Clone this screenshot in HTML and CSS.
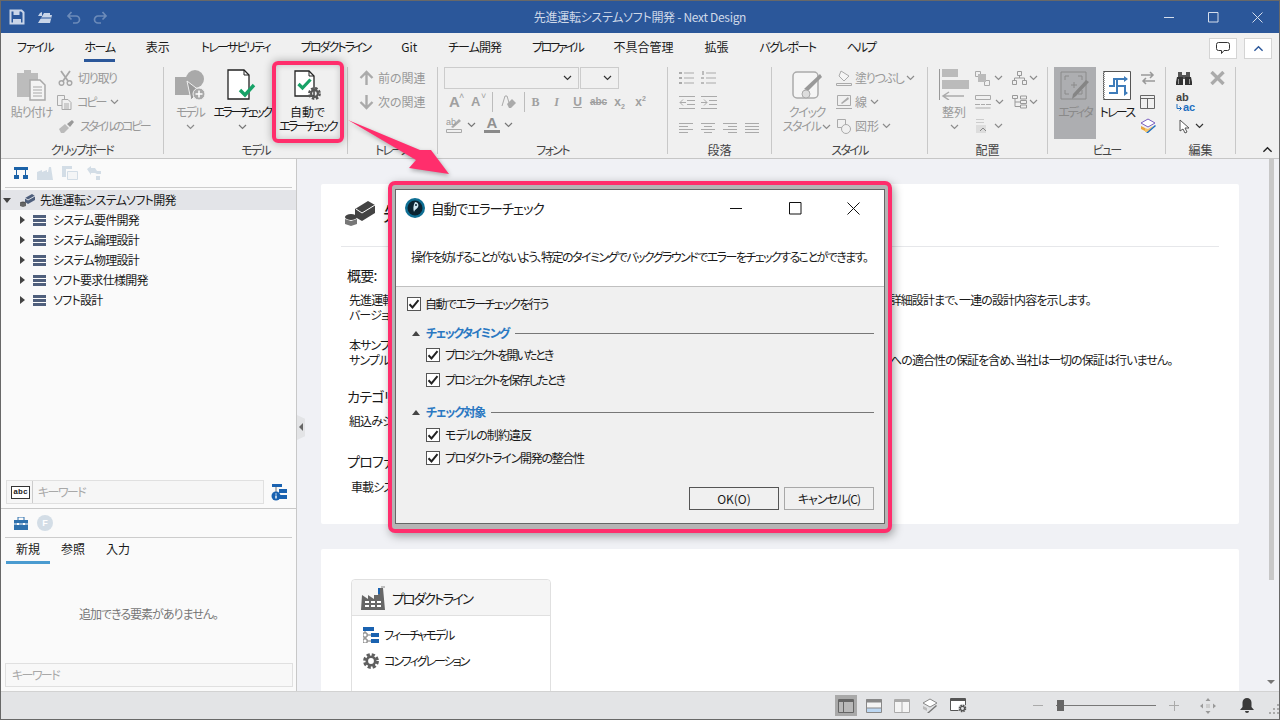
FILE: index.html
```html
<!DOCTYPE html>
<html lang="ja">
<head>
<meta charset="utf-8">
<title>先進運転システムソフト開発 - Next Design</title>
<link rel="stylesheet" href="styles.css">
</head>
<body>
<svg class="defs" width="0" height="0" aria-hidden="true">
  <defs>
    <symbol id="gear" viewBox="0 0 16 16"><circle cx="8" cy="8" r="4.2" fill="none" stroke="currentColor" stroke-width="2.6"/><circle cx="8" cy="8" r="6.4" fill="none" stroke="currentColor" stroke-width="3" stroke-dasharray="3.1 1.92"/></symbol>
    <symbol id="chev" viewBox="0 0 9 6"><path d="M1 1l3.5 3.5L8 1" fill="none" stroke="currentColor" stroke-width="1.2"/></symbol>
    <symbol id="tick" viewBox="0 0 14 14"><path d="M2.5 7.2l3 3.2 6-7.2" fill="none" stroke="currentColor" stroke-width="2"/></symbol>
    <symbol id="bars" viewBox="0 0 13 11"><path d="M0 0h13v3H0zM0 4h13v3H0zM0 8h13v3H0z" fill="#4f5f7c"/></symbol>
    <symbol id="feature" viewBox="0 0 16 16"><path d="M0 0h11v4H0zM8 6h8v4H8zM8 12h8v4H8z" fill="#1a62b0"/><path d="M2 4v10h6M2 8h6" fill="none" stroke="#777"/><path d="M0 6h4v4H0zM0 12h4v4H0z" fill="#fff" stroke="#777"/></symbol>
  </defs>
</svg>
<div class="window">
  <header class="titlebar">
    <div class="qat">
      <svg class="qi" width="16" height="16" viewBox="0 0 16 16"><path d="M1.500 1.500h11l2 2v11h-13z" fill="none" stroke="#c9d5e8" stroke-width="2"/><path d="M4.500 2h6v4h-6zM4 10h8v4.500H4z" fill="#c9d5e8"/></svg>
      <svg class="qi" width="16" height="16" viewBox="0 0 16 16"><path d="M1 7h4V3l-2 1M7 4h6v2h2l-2 8H1z" fill="#c9d5e8"/><path d="M3 9h11" stroke="#2b579a"/></svg>
      <svg class="qi" width="16" height="16" viewBox="0 0 16 16"><path d="M4 7h7a3.500 3.500 0 0 1 0 7H8M6.500 3L3 7l3.500 3.500" fill="none" stroke="#6c8bb9" stroke-width="1.700"/></svg>
      <svg class="qi" width="16" height="16" viewBox="0 0 16 16"><path d="M12 7H5a3.500 3.500 0 0 0 0 7h3M9.500 3L13 7l-3.500 3.500" fill="none" stroke="#6c8bb9" stroke-width="1.700"/></svg>
    </div>
    <div class="apptitle">先進運転システムソフト開発 - Next Design</div>
    <div class="winctl">
      <svg width="11" height="11" viewBox="0 0 11 11"><path d="M0 5.500h10" stroke="#d5deec"/></svg>
      <svg width="11" height="11" viewBox="0 0 11 11"><path d="M.5.500h9.500v9.500H.5z" fill="none" stroke="#d5deec"/></svg>
      <svg width="11" height="11" viewBox="0 0 11 11"><path d="M.5.500l10 10M10.500.500l-10 10" stroke="#d5deec"/></svg>
    </div>
  </header>

  <nav class="tabs">
    <span class="tab ls13">ファイル</span><span class="tab on ls13">ホーム</span><span class="tab">表示</span><span class="tab ls17">トレーサビリティ</span><span class="tab ls20">プロダクトライン</span><span class="tab">Git</span><span class="tab ls10">チーム開発</span><span class="tab ls23">プロファイル</span><span class="tab">不具合管理</span><span class="tab">拡張</span><span class="tab ls15">バグレポート</span><span class="tab ls20">ヘルプ</span>
    <div class="tabtools">
      <span class="tbtn"><svg width="14" height="13" viewBox="0 0 14 13"><path d="M2.500.500h9a2 2 0 0 1 2 2v4a2 2 0 0 1-2 2H8l-2.500 3v-3h-3a2 2 0 0 1-2-2v-4a2 2 0 0 1 2-2z" fill="none" stroke="#333"/></svg></span>
      <span class="tbtn"><svg class="blue" width="11" height="7" viewBox="0 0 9 6"><path d="M1 5l3.500-3.500L8 5" fill="none" stroke="currentColor" stroke-width="1.200"/></svg></span>
    </div>
  </nav>

  <section class="ribbon">
    <div class="grp g-clip">
      <div class="body">
        <div class="big dis b-paste">
          <div class="ico"><svg width="30" height="32" viewBox="0 0 30 32"><path d="M0 4h7V1h7v3h7v24H0z" fill="#bcbcbc"/><path d="M13 11h10l5 5v15H13z" fill="#f4f4f4" stroke="#a8a8a8" stroke-width="1.500"/><path d="M16 18h9M16 21h9M16 24h9M16 27h9" stroke="#a8a8a8"/></svg></div>
          <span class="ls10">貼り付け</span>
        </div>
        <div class="smalls s-clip">
          <div class="srow dis"><svg width="15" height="16" viewBox="0 0 15 16"><circle cx="3.500" cy="13" r="2.300" fill="none" stroke="#a8a8a8" stroke-width="1.500"/><circle cx="11.500" cy="13" r="2.300" fill="none" stroke="#a8a8a8" stroke-width="1.500"/><path d="M3 1l7 10M12 1L5 11" stroke="#a8a8a8" stroke-width="1.800"/></svg><span class="ls13">切り取り</span></div>
          <div class="srow dis r-copy"><svg width="15" height="15" viewBox="0 0 15 15"><path d="M.5.500h7v10h-7z" fill="#f0f0f0" stroke="#aaa"/><path d="M5 4.500h6l3 3v7H5z" fill="#f0f0f0" stroke="#aaa"/><path d="M7 9h5M7 11h5M7 13h5" stroke="#aaa"/></svg><span class="ls20">コピー</span><svg class="chev" width="9" height="6"><use href="#chev"/></svg></div>
          <div class="srow dis"><svg width="17" height="14" viewBox="0 0 17 14"><path d="M1 10l6-5 4 4-5 5H3z" fill="#bbb"/><path d="M9 5l5-4 2 2-4 5z" fill="#999"/></svg><span class="ls25">スタイルのコピー</span></div>
        </div>
      </div>
      <div class="glabel">クリップボード</div>
    </div>

    <div class="grp g-model">
      <div class="body">
        <div class="big dis b-model">
          <div class="ico"><svg width="32" height="32" viewBox="0 0 32 32"><path d="M1 8h18v18H1z" fill="#a9a9a9"/><circle cx="21" cy="10" r="9" fill="#a9a9a9"/><path d="M13 12l13 10-9 9z" fill="#999" stroke="#f0f0f0"/><circle cx="25" cy="25" r="6" fill="#a9a9a9" stroke="#f0f0f0"/><path d="M25 21.500v7M21.500 25h7" stroke="#fff" stroke-width="1.500"/></svg></div>
          <span class="ls20">モデル</span>
          <svg class="chev" width="9" height="6"><use href="#chev"/></svg>
        </div>
        <div class="big b-err">
          <div class="ico"><svg width="30" height="32" viewBox="0 0 30 32"><path d="M1 1h16l5 5v24H1z" fill="#fff" stroke="#222" stroke-width="1.300"/><path d="M17 1v5h5" fill="none" stroke="#222"/><path d="M13 21l5 5 9-10" fill="none" stroke="#17a267" stroke-width="3.400"/></svg></div>
          <span class="ls25">エラーチェック</span>
          <svg class="chev" width="9" height="6"><use href="#chev"/></svg>
        </div>
        <div class="big b-auto">
          <div class="ico"><svg width="27" height="30" viewBox="0 0 27 30"><path d="M1 1h14l5 5v20H1z" fill="#fff" stroke="#222" stroke-width="1.300"/><path d="M15 1v5h5" fill="none" stroke="#222"/><path d="M4.500 14l4 4 8-8.500" fill="none" stroke="#17a267" stroke-width="3.200"/><use href="#gear" x="14" y="17" width="13" height="13" class="gearc"/></svg></div>
          <span>自動で<br><span class="ls25">エラーチェック</span></span>
        </div>
      </div>
      <div class="glabel">モデル</div>
    </div>

    <div class="grp g-rel">
      <div class="body">
        <div class="smalls s-rel">
          <div class="srow dis"><svg width="15" height="16" viewBox="0 0 15 16"><path d="M7.500 15V2M1.500 8l6-6 6 6" fill="none" stroke="#aaa" stroke-width="2.400"/></svg><span>前の関連</span></div>
          <div class="srow dis"><svg width="15" height="16" viewBox="0 0 15 16"><path d="M7.500 1v13M1.500 8l6 6 6-6" fill="none" stroke="#aaa" stroke-width="2.400"/></svg><span>次の関連</span></div>
        </div>
      </div>
      <div class="glabel">トレース</div>
    </div>

    <div class="grp g-font">
      <div class="body col">
        <div class="combos">
          <span class="combo c-name"><svg class="chev dark" width="9" height="6"><use href="#chev"/></svg></span>
          <span class="combo c-size"><svg class="chev dark" width="9" height="6"><use href="#chev"/></svg></span>
        </div>
        <div class="frow f2">
          <b class="fa big1">A<i>˄</i></b><b class="fa big2">A<i>˅</i></b><span class="vsep"></span>
          <svg class="eraser" width="16" height="15" viewBox="0 0 16 15"><path d="M1 11L4 1h2l3 10" fill="none" stroke="#aaa"/><path d="M6 9l5-5 4 4-5 5H8z" fill="#aaa"/></svg><span class="vsep"></span>
          <b class="fb">B</b><i class="fb fi">I</i><u class="fb fu">U</u><s class="fb fs">abc</s><b class="fb fx">x<sub>2</sub></b><b class="fb fx">x<sup>2</sup></b>
        </div>
        <div class="frow f3">
          <svg width="17" height="16" viewBox="0 0 17 16"><path d="M5 10l8-8 2 2-8 7z" fill="#aaa"/><path d="M.5 12.500h15v3H.5z" fill="#f0f0f0" stroke="#aaa"/><text x="0" y="8" class="abt">ab</text></svg>
          <svg class="chev" width="9" height="6"><use href="#chev"/></svg>
          <span class="afont">A</span>
          <svg class="chev" width="9" height="6"><use href="#chev"/></svg>
        </div>
      </div>
      <div class="glabel">フォント</div>
    </div>

    <div class="grp g-para">
      <div class="body col pcol">
        <div class="prow">
          <svg width="15" height="14" viewBox="0 0 15 14"><path d="M5 2h10M5 7h10M5 12h10" stroke="#aaa"/><path d="M0 1h3v2H0zM0 6h3v2H0zM0 11h3v2H0z" fill="#aaa"/></svg>
          <svg width="15" height="14" viewBox="0 0 15 14"><path d="M5 2h10M5 7h10M5 12h10" stroke="#aaa"/><path d="M1 0h2v4H1zM0 6h3v2H0zM0 11h3v2H0z" fill="#bbb"/></svg>
        </div>
        <div class="prow p2">
          <svg width="16" height="13" viewBox="0 0 16 13"><path d="M0 .500h16M8 4.500h8M8 8.500h8M0 12.500h16M7 6.500H1M4 3.500l-3 3 3 3" fill="none" stroke="#aaa"/></svg>
          <svg width="16" height="13" viewBox="0 0 16 13"><path d="M0 .500h16M8 4.500h8M8 8.500h8M0 12.500h16M0 6.500h6M3 3.500l3 3-3 3" fill="none" stroke="#aaa"/></svg>
        </div>
        <div class="prow p3">
          <svg width="14" height="10" viewBox="0 0 14 10"><path d="M0 .500h14M0 3.500h9M0 6.500h14M0 9.500h9" stroke="#aaa"/></svg>
          <svg width="14" height="10" viewBox="0 0 14 10"><path d="M0 .500h14M3 3.500h8M0 6.500h14M3 9.500h8" stroke="#aaa"/></svg>
          <svg width="14" height="10" viewBox="0 0 14 10"><path d="M0 .500h14M5 3.500h9M0 6.500h14M5 9.500h9" stroke="#aaa"/></svg>
          <svg width="14" height="10" viewBox="0 0 14 10"><path d="M0 .500h14M0 3.500h14M0 6.500h14M0 9.500h14" stroke="#aaa"/></svg>
        </div>
      </div>
      <div class="glabel kj">段落</div>
    </div>

    <div class="grp g-style">
      <div class="body">
        <div class="big dis b-quick">
          <div class="ico"><svg width="31" height="29" viewBox="0 0 31 29"><rect x="1" y="1" width="25" height="26" rx="4" fill="#f5f5f5" stroke="#aaa" stroke-width="1.500"/><path d="M30 6L16 20l-4-2L28 3z" fill="#999"/><circle cx="14" cy="23" r="4" fill="#ddd" stroke="#aaa"/></svg></div>
          <span class="ls13">クイック<br>スタイル<svg class="chev" width="9" height="6"><use href="#chev"/></svg></span>
        </div>
        <div class="smalls s-style">
          <div class="srow dis"><svg width="16" height="16" viewBox="0 0 16 16"><path d="M5 1l8 5-5 5-5-5z" fill="#f5f5f5" stroke="#aaa"/><path d="M.5 13.500h15v2H.5z" fill="none" stroke="#aaa"/></svg><span class="ls13">塗りつぶし</span><svg class="chev" width="9" height="6"><use href="#chev"/></svg></div>
          <div class="srow dis"><svg width="16" height="16" viewBox="0 0 16 16"><path d="M1.500 1.500h13v10h-13zM0 14.500h16" fill="none" stroke="#aaa"/><path d="M5 9l7-6 1 2-7 5z" fill="#aaa"/></svg><span>線</span><svg class="chev" width="9" height="6"><use href="#chev"/></svg></div>
          <div class="srow dis"><svg width="16" height="16" viewBox="0 0 16 16"><path d="M1.500 1.500h8v8h-8z" fill="none" stroke="#aaa"/><circle cx="10" cy="11" r="4.500" fill="#f0f0f0" stroke="#aaa"/></svg><span>図形</span><svg class="chev" width="9" height="6"><use href="#chev"/></svg></div>
        </div>
      </div>
      <div class="glabel">スタイル</div>
    </div>

    <div class="grp g-arr">
      <div class="body">
        <div class="big dis b-arr">
          <div class="ico"><svg width="30" height="31" viewBox="0 0 30 31"><path d="M.5 0v31" stroke="#999"/><path d="M3 0h16v8H3zM3 11h27v9H3z" fill="#bbb"/><path d="M25 27H4M10 23l-6 4 6 4" fill="none" stroke="#aaa" stroke-width="1.500"/></svg></div>
          <span>整列</span>
          <svg class="chev" width="9" height="6"><use href="#chev"/></svg>
        </div>
        <div class="smalls s-arr">
          <div class="srow dis"><svg width="15" height="15" viewBox="0 0 15 15"><path d="M.5.500h5v5h-5zM9.500 9.500h5v5h-5z" fill="#f0f0f0" stroke="#aaa"/><path d="M3 3h8v8H3z" fill="#bbb"/></svg><svg class="chev" width="9" height="6"><use href="#chev"/></svg></div>
          <div class="srow dis"><svg width="16" height="14" viewBox="0 0 16 14"><path d="M.5.500h15v4H.5z" fill="none" stroke="#aaa"/><path d="M0 9.500h5M11 9.500h5M6 9.500h4M.5 13h15" stroke="#aaa"/></svg><svg class="chev" width="9" height="6"><use href="#chev"/></svg></div>
          <div class="srow dis"><svg width="15" height="15" viewBox="0 0 15 15"><path d="M1 .500h8M1 3.500h8" stroke="#ccc"/><path d="M1 6h10v8H1z" fill="#ddd"/><path d="M5 12l3-3 3 3" fill="none" stroke="#888"/></svg><svg class="chev" width="9" height="6"><use href="#chev"/></svg></div>
        </div>
        <div class="smalls s-arr2">
          <div class="srow dis"><svg width="15" height="14" viewBox="0 0 15 14"><path d="M5.500.500h4v4h-4zM.5 9.500h4v4h-4zM10.500 9.500h4v4h-4zM7.500 4.500v2.500M2.500 9.500V7h10v2.500" fill="none" stroke="#999"/></svg><svg class="chev" width="9" height="6"><use href="#chev"/></svg></div>
          <div class="srow dis"><svg width="15" height="14" viewBox="0 0 15 14"><path d="M.5.500h5v3h-5zM8.500 1h6v3h-6zM8.500 5.500h6v3h-6zM8.500 10h6v3h-6zM3 3.500V11.500h5.500M3 7h5.500" fill="none" stroke="#999"/></svg><svg class="chev" width="9" height="6"><use href="#chev"/></svg></div>
        </div>
      </div>
      <div class="glabel kj">配置</div>
    </div>

    <div class="grp g-view">
      <div class="body">
        <div class="big active b-ed">
          <div class="ico"><svg width="30" height="29" viewBox="0 0 30 29"><path d="M1 1h25v27H1z" fill="none" stroke="#8a8a8a"/><path d="M5 9V5h4M18 5h4v4M5 19v4h4M22 19v4h-4M11 14h6M14 11v6" fill="none" stroke="#8a8a8a"/><path d="M29 11L16 25l-4 3 1-5L26 9z" fill="#858585"/></svg></div>
          <span class="ls20">エディタ</span>
        </div>
        <div class="big b-tr">
          <div class="ico"><svg width="28" height="29" viewBox="0 0 28 29"><path d="M.5.500h27v28H.500z" fill="#fff" stroke="#555"/><path d="M1 1v27" stroke="#999" stroke-dasharray="1 1" stroke-width="2"/><path d="M6 15h5V8h8M6 22h8V8M14 15h8v7h2M19 8h5" fill="none" stroke="#3e7cba" stroke-width="2"/><path d="M21 5l4 3-4 3zM21 19l4 3-4 3z" fill="#3e7cba"/></svg></div>
          <span class="ls17">トレース</span>
        </div>
        <div class="smalls s-view">
          <div class="srow"><svg width="16" height="14" viewBox="0 0 16 14"><path d="M1 4h12M10 1l3 3-3 3M15 10H3M6 7l-3 3 3 3" fill="none" stroke="#999" stroke-width="1.500"/></svg></div>
          <div class="srow"><svg width="15" height="14" viewBox="0 0 15 14"><path d="M.5.500h14v13H.5zM.5 3.500h14M7.500 3.500v10" fill="none" stroke="#666"/></svg></div>
          <div class="srow"><svg width="16" height="16" viewBox="0 0 16 16"><path d="M1 5l7-4 7 4-7 4z" fill="#fff" stroke="#7a5fc0"/><path d="M1 8l4 2v3l-4-2z" fill="#e9a53a"/><path d="M5 10l3 1 5-3-4 6H5z" fill="#f4c36a"/><path d="M6 15l9-8 1 1-8 7z" fill="#1e6fc0"/></svg></div>
        </div>
      </div>
      <div class="glabel">ビュー</div>
    </div>

    <div class="grp g-edit">
      <div class="body">
        <div class="smalls s-edit">
          <div class="srow"><svg width="16" height="13" viewBox="0 0 16 13"><path d="M2 0h4v5H2zM10 0h4v5h-4zM6 3h4v4H6z" fill="#555"/><path d="M1 5h6v8H0v-3zM9 5h6l1 5v3H9z" fill="#333"/><path d="M2.500 7v5M13.500 7v5" stroke="#999"/></svg><svg class="xmark" width="15" height="14" viewBox="0 0 15 14"><path d="M1.500 1l12 12M13.500 1l-12 12" stroke="#aaa" stroke-width="3.400"/></svg></div>
          <div class="srow abac"><b>ab</b><b class="ac"><svg class="rep" width="6" height="7" viewBox="0 0 6 7"><path d="M1 0v4.500h4M3.500 2.500l2 2-2 2" fill="none" stroke="#1e6fc0"/></svg>ac</b></div>
          <div class="srow"><svg class="cur" width="12" height="15" viewBox="0 0 12 15"><path d="M1 1v11l3-2 2 4 2-1-2-4h4z" fill="#fff" stroke="#555"/></svg><svg class="chev dark" width="9" height="6"><use href="#chev"/></svg></div>
        </div>
      </div>
      <div class="glabel kj">編集</div>
    </div>
    <div class="ribbon-end"><svg width="11" height="7" viewBox="0 0 9 6"><path d="M1 5l3.500-3.500L8 5" fill="none" stroke="#222" stroke-width="1.200"/></svg></div>
  </section>

  <main class="main">
    <aside class="left">
      <div class="ltool">
        <svg width="14" height="12" viewBox="0 0 14 12"><path d="M0 0h14v3H0zM0 8h5v4H0zM9 8h5v4H9z" fill="#1b62a8"/><path d="M2.500 3v5M11.500 3v5" stroke="#1b62a8"/></svg>
        <svg width="16" height="14" viewBox="0 0 16 14"><path d="M0 6l5-2v2l5-2v2h1l1-5h2l2 13H0z" fill="#d3dde6"/></svg>
        <svg width="16" height="14" viewBox="0 0 16 14"><path d="M0 0h10v3H0z" fill="#d3dde6"/><path d="M0 3h4v8H0z" fill="#d3dde6"/><path d="M5.500 5.500h10v8h-10z" fill="#f4f5f6" stroke="#d3dde6"/></svg>
        <svg width="14" height="14" viewBox="0 0 14 14"><path d="M0 3l4-3v2h4l2 3h4v3l-4 0-2-1H4v2z" fill="#d3dde6"/><path d="M9 10h4v4H9z" fill="#d3dde6"/></svg>
      </div>
      <div class="tree">
        <div class="node root"><span class="tri down"></span><svg width="15" height="13" viewBox="0 0 15 13"><path d="M5 4l7-4 3 2v4L8 10 5 8z" fill="#4f5f7c"/><path d="M5 4l3 2 7-4" fill="none" stroke="#fff" stroke-width=".8"/><ellipse cx="3" cy="9" rx="3" ry="1.500" fill="#555"/><path d="M0 9v3l3 1 3-1V9z" fill="#666"/></svg><span>先進運転システムソフト開発</span></div>
        <div class="node"><span class="tri"></span><svg width="13" height="11"><use href="#bars"/></svg><span>システム要件開発</span></div>
        <div class="node"><span class="tri"></span><svg width="13" height="11"><use href="#bars"/></svg><span>システム論理設計</span></div>
        <div class="node"><span class="tri"></span><svg width="13" height="11"><use href="#bars"/></svg><span>システム物理設計</span></div>
        <div class="node"><span class="tri"></span><svg width="13" height="11"><use href="#bars"/></svg><span>ソフト要求仕様開発</span></div>
        <div class="node"><span class="tri"></span><svg width="13" height="11"><use href="#bars"/></svg><span>ソフト設計</span></div>
      </div>
      <div class="searchrow">
        <div class="search">
          <span class="abc">abc</span>
          <span class="ph">キーワード</span>
        </div>
        <svg class="infoi" width="16" height="17" viewBox="0 0 16 17"><path d="M1 0h10v3H1zM8 5h8v4H8zM8 11h8v4H8z" fill="#1a62b0"/><path d="M5 3v5" stroke="#777"/><circle cx="5" cy="12" r="4.500" fill="#1a62b0"/><path d="M5 9.500v1M5 11.500v3" stroke="#fff" stroke-width="1.400"/></svg>
      </div>
      <div class="lower">
        <div class="ltool low">
          <svg width="14" height="13" viewBox="0 0 14 13"><path d="M0 3h14v10H0z" fill="#2f71ad"/><path d="M4 3V0h6v3" fill="none" stroke="#2f71ad"/><path d="M0 7h14" stroke="#fff"/><path d="M3 6h2v2H3zM9 6h2v2H9z" fill="#fff"/></svg>
          <span class="fcircle">F</span>
        </div>
        <div class="ptabs"><span class="ptab on">新規</span><span class="ptab">参照</span><span class="ptab">入力</span></div>
        <div class="pane">追加できる要素がありません。</div>
        <div class="kw">キーワード</div>
      </div>
    </aside>

    <div class="content">
      <div class="cards">
        <article class="card c1">
          <div class="chead">
            <svg width="30" height="25" viewBox="0 0 30 25"><path d="M10 8L23 0l7 4v8l-13 8-7-4z" fill="#444"/><path d="M11 8l6 4 13-8" fill="none" stroke="#fff" stroke-width="1"/><ellipse cx="6" cy="16" rx="6" ry="3" fill="#444"/><path d="M0 18v5l6 2 6-2v-5l-6 2z" fill="#777"/></svg>
            <h1>先進運転システムソフト開発</h1>
          </div>
          <h3 class="h-first">概要:</h3>
          <p class="p-first">先進運転システムソフト開発のサンプルプロジェクトです。システム要件開発からソフト要求仕様開発を経て基本設計詳細設計まで、一連の設計内容を示します。<br>バージョン 1.0</p>
          <p class="p-next">本サンプルはNext Designの利用例を紹介するものです。<br>サンプルおよびその内容について、明示または黙示を問わず、商品性、安全性等、正確性、完全性、有用性、特定の目的への適合性の保証を含め、当社は一切の保証は行いません。</p>
          <h3 class="h-cat">カテゴリ</h3>
          <p class="p-val">組込みシステム</p>
          <h3 class="h-prof">プロファイル</h3>
          <p class="p-val2">車載システム</p>
        </article>
        <article class="card c2">
          <div class="sub">
            <div class="subhead">
              <svg width="25" height="24" viewBox="0 0 25 24"><path d="M0 24l1-15 6 4V9l6 4V9h4l1-7h4l2 22z" fill="#666"/><path d="M17 8V2h2v6z" fill="#1a62b0"/><path d="M20 1h4" stroke="#888"/><path d="M4 15h4v2H4zM10 15h4v2h-4zM16 15h4v2h-4zM4 19h4v2H4zM10 19h4v2h-4zM16 19h4v2h-4z" fill="#fff"/></svg>
              <span class="ls20">プロダクトライン</span>
            </div>
            <div class="subrow"><svg width="16" height="16"><use href="#feature"/></svg><span class="ls20">フィーチャモデル</span></div>
            <div class="subrow"><svg class="gearg" width="16" height="16"><use href="#gear"/></svg><span class="ls20">コンフィグレーション</span></div>
          </div>
        </article>
      </div>
      <div class="vscroll"><span class="thumb"></span><span class="down"></span></div>
      <span class="grip"></span>
    </div>
  </main>

  <footer class="status">
    <span class="st on"><svg width="16" height="14" viewBox="0 0 16 14"><path d="M.5.500h15v13H.5z" fill="#b9b9b9" stroke="#666"/><path d="M0 1h16v2H0z" fill="#666"/><path d="M5.500 3v10" stroke="#666"/></svg></span>
    <span class="st"><svg width="16" height="14" viewBox="0 0 16 14"><path d="M.5.500h15v13H.5z" fill="#f4f4f4" stroke="#888"/><path d="M1 9h14v4H1z" fill="#bcd7f2"/><path d="M0 1h16v2H0zM0 9h16" fill="#888" stroke="#888"/></svg></span>
    <span class="st"><svg width="16" height="14" viewBox="0 0 16 14"><path d="M.5.500h15v13H.5z" fill="#f4f4f4" stroke="#aaa"/><path d="M0 1h16v2H0z" fill="#aaa"/><path d="M8 3v10" stroke="#aaa"/></svg></span>
    <span class="st"><svg width="16" height="16" viewBox="0 0 16 16"><path d="M1 5l7-4 7 4-7 4z" fill="#fff" stroke="#888"/><path d="M1 8l4 2v3l-4-2z" fill="#bbb"/><path d="M5 15l9-8 1 1-8 7z" fill="#777"/></svg></span>
    <span class="st"><svg width="17" height="15" viewBox="0 0 17 15"><path d="M.5.500h15v12H.5z" fill="#fff" stroke="#555"/><path d="M0 1h16v2H0z" fill="#555"/><circle cx="12.500" cy="10.500" r="4.500" fill="#e3e4e6"/><use href="#gear" x="8.500" y="6.500" width="8" height="8" class="gearc"/></svg></span>
    <span class="zoomminus"></span>
    <span class="slider"><i></i></span>
    <span class="zoomplus"></span>
    <svg class="fit" width="16" height="16" viewBox="0 0 16 16"><path d="M8 0l2.500 3h-5zM8 16l-2.500-3h5zM0 8l3-2.500v5zM16 8l-3 2.500v-5z" fill="#999"/><path d="M6 6h4v4H6z" fill="#ccc"/></svg>
    <svg class="bell" width="14" height="15" viewBox="0 0 14 15"><path d="M7 0a4.500 4.500 0 0 1 4.500 4.500V9L14 12H0l2.500-3V4.500A4.500 4.500 0 0 1 7 0zM5 13h4a2 2 0 0 1-4 0z" fill="#3a3a3a"/></svg>
    <svg class="sgrip" width="11" height="11" viewBox="0 0 11 11"><path d="M9 0h2v2H9zM5 4h2v2H5zM9 4h2v2H9zM1 8h2v2H1zM5 8h2v2H5zM9 8h2v2H9z" fill="#aaa"/></svg>
  </footer>

  <div class="mark"></div>
  <svg class="arrow" width="120" height="70" viewBox="0 0 120 70"><path d="M1 1L73 31 84 31 102 55 62 49 69 41z" fill="#ff2e6c"/></svg>

  <div class="dialog">
    <div class="dlg">
      <div class="dhead">
        <div class="dtitle">
          <svg width="20" height="20" viewBox="0 0 20 20"><circle cx="10" cy="10" r="10" fill="#0f6f94"/><circle cx="10" cy="10" r="7.500" fill="#0b2432"/><path d="M10 4c3 0 4 3 3 5s-3 2-4 5c-1-3-1-6 1-10z" fill="#cfe6f2"/><circle cx="11" cy="7" r="1" fill="#0b2432"/></svg>
          <span class="ls11">自動でエラーチェック</span>
          <div class="dctl">
            <span><svg width="13" height="13" viewBox="0 0 13 13"><path d="M0 6.500h12" stroke="#111"/></svg></span>
            <span><svg width="13" height="13" viewBox="0 0 13 13"><path d="M.5.500h11.500v11.500H.5z" fill="none" stroke="#111"/></svg></span>
            <span><svg width="13" height="13" viewBox="0 0 13 13"><path d="M.5.500l12 12M12.500.500l-12 12" stroke="#111"/></svg></span>
          </div>
        </div>
        <p class="ddesc ls15">操作を妨げることがないよう、特定のタイミングでバックグラウンドでエラーをチェックすることができます。</p>
      </div>
      <div class="dbody">
        <label class="chk top"><span class="box"><svg width="14" height="14"><use href="#tick"/></svg></span><span class="ls15">自動でエラーチェックを行う</span></label>
        <div class="sect s1"><span class="tri up"></span><b class="ls15">チェックタイミング</b><i></i></div>
        <label class="chk sub1"><span class="box"><svg width="14" height="14"><use href="#tick"/></svg></span><span class="ls20">プロジェクトを開いたとき</span></label>
        <label class="chk sub2"><span class="box"><svg width="14" height="14"><use href="#tick"/></svg></span><span class="ls17">プロジェクトを保存したとき</span></label>
        <div class="sect s2"><span class="tri up"></span><b class="ls13">チェック対象</b><i></i></div>
        <label class="chk sub3"><span class="box"><svg width="14" height="14"><use href="#tick"/></svg></span><span class="ls09">モデルの制約違反</span></label>
        <label class="chk sub3"><span class="box"><svg width="14" height="14"><use href="#tick"/></svg></span><span class="ls13">プロダクトライン開発の整合性</span></label>
        <div class="dbtns"><button class="btn def">OK(O)</button><button class="btn ls10">キャンセル(C)</button></div>
      </div>
    </div>
  </div>
</div>
</body>
</html>
```
FILE: styles.css
```css
*{box-sizing:border-box}
html,body{margin:0;padding:0;height:720px;overflow:hidden}
body{font:12px/16px "Noto Sans CJK JP","Noto Sans",sans-serif;font-feature-settings:"palt";color:#1a1a1a;background:#f0f0f0}
.defs{position:absolute}
svg{display:block;flex:none}
.ls09{letter-spacing:-.9px}
.ls10{letter-spacing:-1px}
.ls11{letter-spacing:-1.100px}
.ls13{letter-spacing:-1.300px}
.ls15{letter-spacing:-1.550px}
.ls17{letter-spacing:-1.750px}
.ls20{letter-spacing:-2px}
.ls23{letter-spacing:-2.300px}
.ls25{letter-spacing:-2.500px}
.window{position:relative;width:1280px;height:720px;border:1px solid #686868;display:flex;flex-direction:column;overflow:hidden}

.titlebar{height:32px;background:#2b579a;display:flex;align-items:center;position:relative;flex:none}
.qat{display:flex;gap:12px;padding-left:8px}
.apptitle{position:absolute;left:0;right:0;text-align:center;color:#cfd9e9;font-size:12px;top:8px;letter-spacing:-.3px}
.winctl{margin-left:auto;display:flex;gap:33px;padding-right:16px}

.tabs{height:30px;background:#f0f0f0;display:flex;align-items:flex-start;flex:none;position:relative;padding-left:16px}
.tab{height:29px;line-height:28px;border-bottom:3px solid transparent;white-space:nowrap;margin-right:31px;font-size:12px}
.tab.on{border-bottom-color:#2b579a}
.tabtools{margin-left:auto;display:flex;gap:7px;padding:5px 7px 0 0}
.tbtn{width:28px;height:21px;background:#fff;border:1px solid #d4d4d4;display:flex;align-items:center;justify-content:center}
.blue{color:#2b579a}

.ribbon{height:96px;background:#f0f0f0;border-bottom:1px solid #c6c6c6;padding-top:4px;display:flex;flex:none}
.grp{height:87px;border-right:1px solid #c8c8c8;display:flex;flex-direction:column;flex:none}
.body{height:73px;display:flex}
.body.col{flex-direction:column}
.glabel{height:14px;line-height:20px;text-align:center;font-size:12px;color:#444;letter-spacing:-1.700px}
.glabel.kj{letter-spacing:0}
.g-clip{width:163px}.g-model{width:184px}.g-rel{width:90px}.g-font{width:230px}.g-para{width:104px}.g-style{width:156px}.g-arr{width:120px}.g-view{width:118px}.g-edit{width:70px}
.ribbon-end{flex:1;display:flex;align-items:flex-end;justify-content:flex-end;padding:0 6px 5px 0}

.big{display:flex;flex-direction:column;align-items:center;line-height:14px;flex:none;white-space:nowrap;text-align:center}
.big>span{display:block}
.big .chev{margin-top:5px}
.ico{height:38px;display:flex;align-items:flex-start;justify-content:center;padding-top:2px}
.dis{color:#999}
.chev{color:#777;display:block}
.chev.dark{color:#333}
.dis .chev{color:#8c8c8c}
.b-paste{width:45px;margin-left:8px}
.b-model{width:36px;margin-left:8px}
.b-err{width:60px;margin-left:4px}
.b-auto{width:65px;margin-left:3px}
.b-auto .ico{padding-top:3px}
.b-quick{width:46px;margin-left:12px}
.b-quick .ico{padding-top:4px}
.b-quick .chev{display:inline-block;margin:0 0 1px 2px}
.b-arr{width:32px;margin-left:10px}
.b-ed{width:42px;margin-left:6px;height:72px}
.active{background:#adaeb1;color:#8a8a8a}
.b-ed .ico{padding-top:4px}
.b-tr{width:36px;margin-left:3px}
.b-tr .ico{padding-top:4px}

.smalls{display:flex;flex-direction:column;margin-top:-1px}
.srow{height:24px;display:flex;align-items:center;white-space:nowrap}
.s-clip{margin-left:4px}
.s-clip .srow{gap:5px}
.r-copy{margin-left:-1px}
.s-rel{margin-left:11px}
.s-rel .srow{gap:4px}
.s-style{margin-left:6px}
.s-style .srow{gap:3px}
.s-arr{margin-left:5px}
.s-arr .srow{gap:4px}
.s-arr2{margin-left:8px}
.s-arr2 .srow{gap:2px}
.s-view{margin-left:5px}
.s-edit{margin-left:10px}
.s-edit .srow{gap:18px}
.abac{display:block;height:24px;padding-top:2px;font:bold 11px/10px "Liberation Sans",sans-serif;color:#444}
.abac b{display:block}
.abac .ac{color:#1e6fc0;display:flex;align-items:center;gap:1px}
.cur{margin-left:3px}
.s-edit .srow:last-child{gap:4px}

.combos{display:flex;gap:1px;padding-left:6px}
.combo{height:22px;border:1px solid #ccc;display:flex;align-items:center;justify-content:flex-end;padding-right:6px}
.c-name{width:135px}.c-size{width:39px}
.frow{display:flex;align-items:center;height:24px;padding-left:11px;color:#a0a0a0;white-space:nowrap}
.f2{margin-top:1px}
.f3{padding-left:8px;gap:4px;height:23px;margin-top:-1px}
.fa{font:bold 15px/16px "Liberation Sans",sans-serif;position:relative;width:22px}
.big2{font-size:13px;width:21px}
.fa i{position:absolute;top:-3px;left:10px;font:normal 9px/10px "Liberation Sans",sans-serif}
.vsep{width:1px;height:20px;background:#bcbcbc}
.eraser{margin:0 7px 0 8px}
.fb{font:bold 12px/16px "Liberation Serif",serif;width:21px;text-align:center;color:#a0a0a0;text-decoration-thickness:1px}
.fi{font-style:italic}
.fu{font-family:"Liberation Sans",sans-serif}
.fs{font:bold 10px/16px "Liberation Sans",sans-serif;width:21px}
.fx{font-family:"Liberation Sans",sans-serif}
.fx sub,.fx sup{font-size:7px;line-height:0}
.abt{font:9px "Liberation Sans",sans-serif;fill:#999}
.afont{font:bold 15px/14px "Liberation Sans",sans-serif;border-bottom:3px solid #8a8a8a;width:16px;text-align:center;color:#909090;margin-left:4px}

.pcol{padding:4px 0 0 11px}
.prow{display:flex;gap:7px;height:14px}
.p2{margin-top:11px;gap:6px}
.p3{margin-top:13px;gap:8px}

.main{flex:1;display:flex;min-height:0}
.left{width:296px;background:#fafafa;border-right:1px solid #c8c8c8;display:flex;flex-direction:column;flex:none}
.ltool{height:29px;margin:0 4px;border-bottom:1px solid #ccc;display:flex;align-items:center;gap:9px;padding:0 0 0 9px;flex:none}
.tree{flex:1;padding-top:2px;letter-spacing:-.7px}
.node{height:20px;display:flex;align-items:center;padding-left:19px;white-space:nowrap}
.node svg{margin-left:8px;margin-right:7px}
.node.root{background:#e3e4e8;padding-left:4px}
.node.root svg{margin-left:9px;margin-right:5px}
.tri{width:0;height:0;border-style:solid;border-color:transparent;flex:none;border-width:4px 0 4px 5px;border-left-color:#444}
.tri.down{border-width:5px 4.500px 0 4.500px;border-top-color:#444;border-left-color:transparent}
.tri.up{border-width:0 4px 5px 4px;border-bottom-color:#444;border-left-color:transparent}
.searchrow{height:24px;margin:0 0 4px 5px;display:flex;align-items:center;flex:none}
.search{width:258px;height:24px;border:1px solid #e0e0e0;display:flex;align-items:center;background:#f6f6f6}
.abc{width:19px;height:13px;margin-left:4px;border:1px solid #333;font:bold 8px/10px "Liberation Mono",monospace;color:#222;text-align:center;background:#fff}
.ph,.kw{color:#a8a8a8;letter-spacing:-1.600px}
.ph{margin-left:2px;border-left:1px solid #ccc;padding-left:5px;line-height:22px}
.infoi{margin-left:7px}
.lower{height:183px;border-top:1px solid #c8c8c8;flex:none;display:flex;flex-direction:column}
.low{height:29px;gap:9px}
.fcircle{width:16px;height:16px;border-radius:50%;background:#d3dde6;color:#fff;font:bold 9px/16px "Liberation Sans",sans-serif;text-align:center}
.ptabs{display:flex;margin-left:5px;gap:1px;height:26px}
.ptab{padding:0 10px;height:26px;line-height:22px;border-bottom:3px solid transparent;font-size:12px}
.ptab.on{border-bottom-color:#4a9bd0}
.pane{margin:4px 4px 0;width:287px;height:92px;background:#fafafa;display:flex;align-items:center;justify-content:center;color:#777;letter-spacing:-1px}
.kw{margin:3px 0 0 4px;width:288px;height:24px;line-height:22px;border:1px solid #e0e0e0;padding-left:6px;background:#f8f8f8}

.content{flex:1;background:#f0f1f5;display:flex;position:relative;min-width:0;overflow:hidden}
.cards{width:942px;padding:25px 0 0 24px;flex:none}
.card{width:918px;background:#fff;border-radius:2px}
.c1{height:340px;padding:0 20px;margin-bottom:25px}
.c2{height:200px;padding:30px}
.chead{height:63px;border-bottom:1px solid #e6e7ea;display:flex;align-items:center;padding:0 0 4px 4px;gap:8px}
.chead h1{margin:0;font-size:19px;font-weight:400;line-height:24px}
.card h3{margin:0 0 0 6px;font-size:14px;font-weight:400;line-height:20px;letter-spacing:-.7px}
.card p{margin:0 0 0 8px;line-height:15px;white-space:nowrap;letter-spacing:-.9px}
.h-first{margin-top:18px !important}
.p-first{margin-top:7px !important}
.p-next{margin-top:15px !important}
.h-cat{margin-top:19px !important}
.p-val{margin-top:7px !important}
.h-prof{margin-top:23px !important}
.p-val2{margin:8px 0 0 10px !important}
.sub{width:200px;height:170px;border:1px solid #e0e0e0;border-radius:4px 4px 0 0}
.subhead{height:36px;background:#f5f5f5;border-bottom:1px solid #e0e0e0;border-radius:4px 4px 0 0;display:flex;align-items:center;padding-left:9px;gap:6px;font-size:13.500px}
.subrow{display:flex;align-items:center;height:26px;padding-left:11px;gap:5px}
.subhead + .subrow{margin-top:6px}
.gearg{color:#5f5f5f}
.gearc{color:#555}
.vscroll{width:5px;margin-left:30px;display:flex;flex-direction:column;justify-content:space-between;padding-bottom:7px;flex:none}
.thumb{width:5px;height:421px;background:#c8c8c8;display:block}
.down{width:0;height:0;border-style:solid;border-color:#777 transparent transparent;border-width:4px 4px 0 4px;margin-left:-2px}
.grip{position:absolute;left:0;top:256px;width:8px;height:25px;background:#e3e4e6;clip-path:polygon(0 0,100% 15%,100% 85%,0 100%)}
.grip::after{content:"";position:absolute;left:2px;top:8px;border-style:solid;border-color:transparent #666 transparent transparent;border-width:4px 4px 4px 0}

.status{height:28px;background:#e3e4e6;border-top:1px solid #d2d2d2;display:flex;align-items:center;padding-left:834px;gap:6px;flex:none}
.st{width:22px;height:21px;display:flex;align-items:center;justify-content:center}
.st.on{background:#a9a9a9}
.zoomminus{width:10px;height:1px;background:#aaa;margin-left:58px}
.slider{width:100px;height:1px;background:#777;position:relative;margin-left:7px}
.slider i{position:absolute;left:1px;top:-5px;width:7px;height:11px;background:#666}
.zoomplus{width:10px;height:10px;margin-left:7px;background:linear-gradient(#aaa,#aaa) center/10px 1px no-repeat,linear-gradient(#aaa,#aaa) center/1px 10px no-repeat}
.fit{margin-left:15px}
.bell{margin-left:18px}
.sgrip{margin-left:8px;margin-top:8px}

.mark{position:absolute;left:271px;top:60px;width:72px;height:82px;border:4px solid #ff2e6c;border-radius:6px;box-shadow:0 0 8px rgba(0,0,0,.3),inset 0 0 6px rgba(0,0,0,.2)}
.arrow{position:absolute;left:346px;top:118px;filter:drop-shadow(1px 2px 2px rgba(0,0,0,.3))}

.dialog{position:absolute;left:387px;top:180px;width:504px;height:352px;border:4px solid #ff2e6c;border-radius:7px;background:#b5b5b5;padding:4px 3px 5px;box-shadow:2px 3px 10px rgba(0,0,0,.35)}
.dlg{height:100%;border:1px solid #666;display:flex;flex-direction:column;background:#f0f0f0}
.dhead{height:97px;background:#fff;border-bottom:1px solid #c0c0c0;flex:none}
.dtitle{height:36px;display:flex;align-items:center;padding-left:9px;gap:6px;font-size:13.500px}
.dctl{margin-left:auto;display:flex;letter-spacing:0;padding-right:1px}
.dctl span{width:58.500px;display:flex;justify-content:center}
.ddesc{margin:23px 0 0 15px;line-height:16px;white-space:nowrap}
.dbody{flex:1;padding:8px 10px 0 11px;display:flex;flex-direction:column}
.chk{display:flex;align-items:center;height:18px;gap:4px;white-space:nowrap}
.box{width:14px;height:14px;background:#fff;border:1px solid #555;color:#222;display:block;position:relative}
.box svg{position:absolute;left:-1px;top:-1px}
.chk.sub1{margin:4px 0 0 19px;gap:5px}
.chk.sub2{margin:7px 0 0 19px;gap:5px}
.chk.sub3{margin:5px 0 0 19px;gap:5px}
.sect{display:flex;align-items:center;height:18px;padding-left:5px}
.s1{margin-top:11px}
.s2{margin-top:14px}
.sect b{color:#2a78c2;margin-left:6px;font-weight:700;white-space:nowrap}
.sect i{flex:1;height:1px;background:#777;margin-left:6px}
.dbtns{display:flex;justify-content:flex-end;gap:5px;margin-top:20px}
.btn{width:90px;height:23px;padding:0;font:12px/20px "Noto Sans CJK JP","Noto Sans",sans-serif;font-feature-settings:"palt";background:#f0f0f0;border:1px solid #a8a8a8;color:#1a1a1a}
.btn.ls10{letter-spacing:-1px}
.btn.def{border-color:#555}
```
